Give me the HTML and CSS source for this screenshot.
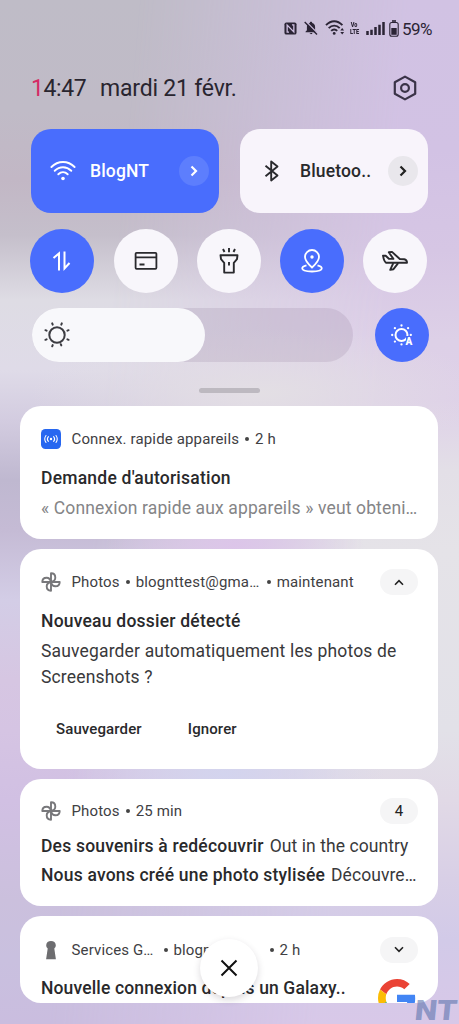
FILE: index.html
```html
<!DOCTYPE html>
<html lang="fr">
<head>
<meta charset="utf-8">
<title>Notifications</title>
<link rel="stylesheet" href="styles.css">
</head>
<body>
<svg class="defs" width="0" height="0">
  <symbol id="pinwheel" viewBox="0 0 20 20"><path d="M10 10V1.300c2.700 0 4.300 2 4.300 4.400 0 2-1.200 3.600-4.300 4.300zM10 10h8.700c0 2.700-2 4.300-4.400 4.300-2 0-3.600-1.200-4.300-4.300zM10 10v8.700c-2.700 0-4.300-2-4.300-4.400 0-2 1.200-3.600 4.300-4.300zM10 10H1.300c0-2.700 2-4.300 4.400-4.300 2 0 3.600 1.200 4.300 4.300z" fill="none" stroke="currentColor" stroke-width="1.900" stroke-linejoin="round"/></symbol>
</svg>
<main class="screen">
  <div class="status">
    <svg class="nfc" width="13" height="13" viewBox="0 0 14 14"><rect x=".5" y=".5" width="13" height="13" rx="2" fill="#2b2435"/><path d="M5.400 11H3.400V3.400l7.200 7.300V3H8.600" fill="none" stroke="#d0c0e2" stroke-width="1.400"/></svg>
    <svg class="bell" width="14" height="14" viewBox="0 0 14 14"><path d="M7 .7c.8 0 1.200.5 1.200 1.200 1.900.6 2.900 2 2.900 4v3.300l1.400 1.500v.6H1.500v-.6l1.400-1.500V5.900c0-2 1-3.400 2.900-4C5.800 1.200 6.200.7 7 .7zM5.700 12.100h2.700c-.2 1.600-2.500 1.600-2.700 0z" fill="#2b2435"/><path d="M1.800.3l12.400 12.600" stroke="#d0c0e2" stroke-width="1.300"/><path d="M.7.9L13 13.500" stroke="#2b2435" stroke-width="1.400"/></svg>
    <svg class="swifi" width="20" height="16" viewBox="0 0 20 16"><g fill="none" stroke="#2b2435" stroke-width="1.900"><path d="M1 5.200C6-.1 12.400-.1 17.400 5.200M3.700 8.200c3.200-3.500 7.800-3.500 11 0M6.200 10.900c1.800-1.900 4.200-1.900 6 0"/></g><circle cx="9.200" cy="13.400" r="1.400" fill="#2b2435"/><path d="M15.300 10.500l1.900-2.400 1.900 2.400zM15.300 12l1.900 2.400 1.900-2.400z" fill="#2b2435"/></svg>
    <span class="volte"><span>Vo</span><span>LTE</span></span>
    <svg class="signal" width="19" height="13" viewBox="0 0 19 13"><path d="M1.500 13V9M5.500 13V7.800M9.500 13V5M13.500 13V2.700M17.500 13V0" stroke="#2b2435" stroke-width="2.500"/></svg>
    <svg class="batt" width="10" height="17" viewBox="0 0 10 17"><path d="M3 1h4" stroke="#2b2435" stroke-width="1.600"/><rect x=".8" y="2.500" width="8.400" height="13.700" rx="2" fill="none" stroke="#2b2435" stroke-width="1.100"/><rect x="2.300" y="8" width="5.400" height="6.800" fill="#2b2435"/></svg>
    <span class="percent">59%</span>
  </div>
  <header class="head">
    <div class="clock"><span class="red">1</span>4:47</div>
    <div class="date">mardi 21 févr.</div>
    <svg class="gear" width="24" height="26" viewBox="0 0 24 26"><path d="M12 1.600l10.200 5.700v11.400L12 24.400 1.800 18.700V7.300z" fill="none" stroke="#3a3347" stroke-width="2.200" stroke-linejoin="round"/><circle cx="12" cy="13" r="3.900" fill="none" stroke="#3a3347" stroke-width="2.200"/></svg>
  </header>
  <section class="tiles">
    <div class="tile on">
      <svg width="26" height="20" viewBox="0 0 26 20"><g fill="none" stroke="#fff" stroke-width="1.900" stroke-linecap="round"><path d="M1.400 6C8-.6 18-.6 24.600 6M4.700 9.800c4.900-4.800 11.700-4.800 16.600 0M8.300 13.300c2.800-2.700 6.600-2.700 9.400 0"/></g><circle cx="13" cy="17.500" r="1.800" fill="#fff"/></svg>
      <span class="label">BlogNT</span>
      <span class="go"><svg width="8" height="12" viewBox="0 0 8 12"><path d="M1.500 1.500L6 6l-4.500 4.500" fill="none" stroke="#fff" stroke-width="2.200"/></svg></span>
    </div>
    <div class="tile off">
      <svg class="bt" width="16" height="22" viewBox="0 0 16 22"><path d="M1.500 5.700l12 9.800L7.200 20.500v-19l6.300 5-12 9.800" fill="none" stroke="#29292d" stroke-width="1.900" stroke-linejoin="round"/></svg>
      <span class="label">Bluetoo..</span>
      <span class="go"><svg width="8" height="12" viewBox="0 0 8 12"><path d="M1.500 1.500L6 6l-4.500 4.500" fill="none" stroke="#222" stroke-width="2.200"/></svg></span>
    </div>
  </section>
  <section class="toggles">
    <div class="round on"><svg width="20" height="22" viewBox="0 0 20 22"><path d="M1.500 8l5.500-4.600V20.500M12.500 1.500v17l5-5.500" fill="none" stroke="#fff" stroke-width="2"/></svg></div>
    <div class="round"><svg width="24" height="20" viewBox="0 0 24 20"><rect x="1.600" y="1.800" width="20.800" height="16" rx="1" fill="none" stroke="#29292d" stroke-width="1.800"/><path d="M2 6.300h20M5.500 13.500h5" fill="none" stroke="#29292d" stroke-width="1.800"/></svg></div>
    <div class="round"><svg width="20" height="28" viewBox="0 0 20 28"><path d="M1.500 8.200h17l-.5 4-3.200 3.600v9.800H5.200v-9.800L2 12.200zM10 15v3.400M10 1v4.300M4 2l1.500 3M16 2l-1.500 3" fill="none" stroke="#29292d" stroke-width="1.900" stroke-linejoin="round"/></svg></div>
    <div class="round on"><svg width="22" height="24" viewBox="0 0 22 24"><g fill="none" stroke="#fff" stroke-width="1.800"><path d="M11 18.500C6.300 14.200 4 11.300 4 8a7 7 0 0 1 14 0c0 3.300-2.300 6.200-7 10.500z"/><path d="M5.500 16.300c-2.300.6-4.300 1.500-4.300 3 0 4.300 19.600 4.300 19.600 0 0-1.500-2-2.400-4.300-3"/></g><circle cx="11" cy="8" r="1.700" fill="#fff"/></svg></div>
    <div class="round"><svg width="26" height="22" viewBox="0 0 26 22"><g fill="none" stroke="#29292d" stroke-width="1.900" stroke-linejoin="round"><path d="M1 5.700h2.700l3.200 3.100 4.500.1-4.600-6.600 3.200-.4 7.800 7.100 4.400.2c1.900.3 2.800 1.500 2.800 3.600H4.200C2.600 12 1.800 10.300 1 5.700z"/><path d="M11.300 13.200l-3.100 6.600 3.300-.6 4.700-6"/></g></svg></div>
  </section>
  <section class="brightness">
    <div class="slider"><div class="fill"><svg width="26" height="26" viewBox="0 0 26 26"><circle cx="13" cy="13" r="7.700" fill="none" stroke="#3c3c42" stroke-width="2"/><g stroke="#3c3c42" stroke-width="2" stroke-linecap="round"><path d="M17.300 2.600l.5-1.200M8.700 2.600l-.5-1.200M17.300 23.400l-.5-1.200M8.200 24.300l.5-1.200M23.400 8.700l1.200-.5M2.600 8.700l-1.200-.5M23.400 17.300l1.200.5M2.600 17.300l-1.200.5"/></g></svg></div></div>
    <div class="auto"><svg width="24" height="24" viewBox="0 0 24 24"><circle cx="11.500" cy="12" r="6" fill="none" stroke="#fff" stroke-width="2"/><g fill="#fff"><circle cx="11.500" cy="2.500" r="1.150"/><circle cx="18.100" cy="5.200" r="1.150"/><circle cx="4.900" cy="5.200" r="1.150"/><circle cx="2.200" cy="12" r="1.150"/><circle cx="20.800" cy="12" r="1.150"/><circle cx="4.900" cy="18.600" r="1.150"/><circle cx="11.500" cy="21.400" r="1.150"/></g></svg><span class="a">A</span></div>
  </section>
  <div class="handle"></div>
  <section class="cards">
    <article class="card c1">
      <div class="meta"><svg width="20" height="20" viewBox="0 0 20 20"><rect width="20" height="20" rx="4.500" fill="#2767f0"/><g fill="none" stroke="#fff" stroke-width="1.050" stroke-linecap="round"><path d="M7.400 7.600a3.600 3.600 0 0 0 0 4.800M12.600 7.600a3.600 3.600 0 0 1 0 4.800M5 6.500a6 6 0 0 0 0 7M15 6.500a6 6 0 0 1 0 7"/></g><circle cx="10" cy="10" r="1.200" fill="#fff"/></svg><span>Connex. rapide appareils</span><i></i><span>2 h</span></div>
      <h2>Demande d'autorisation</h2>
      <p class="gray">« Connexion rapide aux appareils » veut obteni…</p>
    </article>
    <article class="card c2">
      <div class="meta"><svg class="pin" width="20" height="20"><use href="#pinwheel"/></svg><span>Photos</span><i></i><span class="cut">blognttest@gma…</span><i></i><span>maintenant</span><b class="pill"><svg width="10" height="7" viewBox="0 0 10 7"><path d="M1 5.700L5 1.700l4 4" fill="none" stroke="#222" stroke-width="1.600"/></svg></b></div>
      <h2>Nouveau dossier détecté</h2>
      <p class="body">Sauvegarder automatiquement les photos de<br>Screenshots ?</p>
      <div class="actions"><span>Sauvegarder</span><span>Ignorer</span></div>
    </article>
    <article class="card c3">
      <div class="meta"><svg class="pin" width="20" height="20"><use href="#pinwheel"/></svg><span>Photos</span><i></i><span>25 min</span><b class="pill">4</b></div>
      <p class="line"><strong>Des souvenirs à redécouvrir</strong><span>Out in the country</span></p>
      <p class="line"><strong>Nous avons créé une photo stylisée</strong><span>Découvre…</span></p>
    </article>
    <article class="card c4">
      <div class="meta"><svg width="20" height="20" viewBox="0 0 20 20"><path d="M5.200 5.300C5.200 2.500 7.300 1 10 1s4.800 1.500 4.800 4.300c0 1.500-.7 2.500-1.500 3.200L14.900 19.200H5.100L6.700 8.500c-.8-.7-1.500-1.700-1.500-3.200z" fill="#6d6d70"/></svg><span class="service">Services G…</span><i></i><span class="account">blogntte…</span><i></i><span>2 h</span><b class="pill"><svg width="10" height="7" viewBox="0 0 10 7"><path d="M1 1.300l4 4 4-4" fill="none" stroke="#222" stroke-width="1.600"/></svg></b></div>
      <h2>Nouvelle connexion depuis un Galaxy..</h2>
      <svg class="google" width="38" height="38" viewBox="0 0 48 48"><path fill="#ea4335" d="M24 9.500c3.540 0 6.710 1.220 9.210 3.600l6.850-6.850C35.900 2.380 30.470 0 24 0 14.620 0 6.510 5.380 2.560 13.220l7.980 6.190C12.430 13.720 17.740 9.500 24 9.500z"/><path fill="#4285f4" d="M46.980 24.550c0-1.570-.15-3.090-.38-4.550H24v9.020h12.940c-.58 2.960-2.260 5.480-4.780 7.180l7.730 6c4.510-4.180 7.090-10.360 7.090-17.650z"/><path fill="#fbbc05" d="M10.530 28.590A14.500 14.500 0 0 1 9.770 24c0-1.600.27-3.140.76-4.590l-7.980-6.190A24 24 0 0 0 0 24c0 3.880.92 7.540 2.560 10.780z"/><path fill="#34a853" d="M24 48c6.480 0 11.930-2.130 15.890-5.810l-7.730-6C30.010 37.640 27.240 38.490 24 38.490c-6.260 0-11.570-4.220-13.470-9.910l-7.980 6.190C6.510 42.620 14.620 48 24 48z"/></svg>
    </article>
  </section>
  <div class="close"><svg width="18" height="18" viewBox="0 0 18 18"><path d="M1.500 1.500l15 15m0-15l-15 15" stroke="#111" stroke-width="2"/></svg></div>
  <div class="mark">NT</div>
</main>
</body>
</html>
```
FILE: styles.css
```css
* { box-sizing: border-box; }
body { margin: 0; font-family: Roboto, "Liberation Sans", sans-serif; color: #29292b; }
.defs { position: absolute; }
svg { display: block; flex: none; }
h2, p { margin: 0; white-space: nowrap; }

.screen {
  position: relative; width: 459px; height: 1024px; overflow: hidden; isolation: isolate;
  background: linear-gradient(180deg, #bfbcc7 0, #c0bbc7 110px, #c2b7c5 180px, #c5bfcb 235px, #dedce4 300px, #dfdbe8 370px, #d3cce0 420px, #bfb8d0 480px, #c5bbd5 530px, #d3cde6 600px, #d6c6e2 680px, #d5c4e3 730px, #d1c0e3 800px, #cbc0dd 900px, #c9c0df 960px, #cabddf 1024px);
}
.screen::before {
  content: ""; position: absolute; z-index: -1; inset: 0;
  background: linear-gradient(180deg, #d1c2e3 0, #d2c2e4 150px, #d6c6e4 250px, #ddd0e7 340px, #ded0e8 400px, #e3dfe7 470px, #e5e3e8 550px, #e2e1e8 730px, #e1d9e6 800px, #d8cfe6 880px, #d2cae8 940px, #d8c8e8 1024px);
  mask-image: linear-gradient(95deg, transparent 25%, #000 75%);
}
.screen::after {
  content: ""; position: absolute; z-index: -1; inset: 0;
  background:
    radial-gradient(ellipse 130px 60px at 235px 545px, #dcc5e9, transparent),
    radial-gradient(ellipse 160px 70px at 225px 774px, #d3d4ee, transparent),
    radial-gradient(ellipse 230px 65px at 260px 393px, #e3dfe4, transparent);
}

.status { display: flex; align-items: center; height: 57px; padding-left: 284px; }
.nfc, .bell, .swifi { margin-top: -1px; }
.bell { margin-left: 7px; }
.swifi { margin-left: 7px; }
.volte { display: flex; flex-direction: column; width: 11px; margin: -2px 0 0 5px; font-size: 7.500px; line-height: 7px; font-weight: 900; transform: scaleX(.74); transform-origin: left; color: #2b2435; }
.volte span:first-child { padding-left: 1px; }
.signal { margin-left: 5px; }
.batt { margin-left: 4px; }
.percent { margin-left: 3px; font-size: 17px; letter-spacing: -.5px; color: #2b2435; }

.head { display: flex; align-items: center; height: 62px; padding: 0 42px 0 31px; font-size: 23px; line-height: 27px; color: #29252f; white-space: nowrap; }
.clock { width: 69px; letter-spacing: -.4px; }
.red { color: #d52a64; }
.date { letter-spacing: -.2px; }
.gear { margin-left: auto; }

.tiles { display: flex; gap: 21px; padding: 10px 31px 0; }
.tile { display: flex; align-items: center; width: 188px; height: 84px; border-radius: 20px; font-size: 17.500px; font-weight: 500; letter-spacing: .15px; }
.tile.on { padding: 0 10px 0 19px; color: #fff; }
.on, .auto { background: #496dfd; }
.tile.on .label { margin-left: 14px; }
.tile.off { padding: 0 10px 0 24px; background: #f8f4fb; }
.tile.off .label { margin-left: 20px; }
.go { display: grid; place-items: center; width: 30px; height: 30px; margin-left: auto; border-radius: 50%; background: #e9e7ec; }
.on .go { background: #5d7efd; }

.toggles { display: flex; justify-content: space-between; padding: 16px 31.500px 0 30.400px; }
.round { display: grid; place-items: center; width: 64px; height: 64px; border-radius: 50%; background: #f8f6fb; }
.round.on { background: #496dfd; }
.brightness { display: flex; justify-content: space-between; padding: 15px 30.500px 0 32px; }
.slider { width: 321px; height: 54px; border-radius: 27px; background: rgba(143, 123, 153, .2); }
.fill { display: flex; align-items: center; width: 173px; height: 54px; padding-left: 12px; border-radius: 27px; background: #f8f8fb; }
.auto { position: relative; display: grid; place-items: center; width: 54px; height: 54px; border-radius: 50%; }
.auto .a { position: absolute; left: 31px; top: 28px; font-size: 10px; line-height: 12px; font-weight: 900; color: #fff; background: #496dfd; }
.handle { width: 61px; height: 5px; margin: 26px auto 0 199px; border-radius: 3px; background: #bdb9c0; }

.cards { display: flex; flex-direction: column; gap: 10px; padding: 13px 20px 0; }
.card { position: relative; width: 418px; padding: 0 20px 0 21px; border-radius: 21px; background: #fff; overflow: hidden; }
.c1 { height: 133px; }
.c2 { height: 220px; }
.c3 { height: 127px; margin-top: -.5px; }
.c4 { height: 87px; }
.meta { display: flex; align-items: center; height: 26px; margin-top: 20px; font-size: 15px; letter-spacing: .14px; color: #404043; white-space: nowrap; }
.meta > svg { margin-right: 10.500px; }
.meta i { flex: none; width: 4px; height: 4px; margin: 0 6px; border-radius: 50%; background: #444; }
.cut { width: 125px; letter-spacing: .18px; }
.service { width: 86px; }
.account { width: 90px; }
.pin { color: #78787b; }
.pill { display: grid; place-items: center; width: 38px; height: 26px; margin-left: auto; border-radius: 13px; background: #f5f5f6; font-weight: 400; color: #222; }
h2 { font-size: 17.500px; line-height: 26px; font-weight: 500; letter-spacing: .22px; }
p { font-size: 17.500px; line-height: 26px; letter-spacing: .16px; }
.c1 h2 { margin-top: 13px; }
.gray { margin-top: 4px; color: #858587; letter-spacing: .13px; }
.c2 h2 { margin-top: 13px; }
.body { margin-top: 4px; color: #39393b; }
.actions { display: flex; gap: 46px; padding: 28px 15px 0; font-size: 15px; line-height: 22px; font-weight: 500; letter-spacing: .12px; }
.c3 .meta { margin-top: 19px; }
.line { display: flex; gap: 6px; line-height: 29px; }
.line span { color: #39393b; letter-spacing: .07px; }
.c3 .meta + .line { margin-top: 8px; }
.line strong { font-weight: 500; letter-spacing: .2px; }
.c4 .meta { margin-top: 21px; }
.c4 h2 { margin-top: 12px; letter-spacing: .14px; }
.google { position: absolute; left: 358px; top: 63px; }

.close { position: absolute; left: 200px; top: 939px; display: grid; place-items: center; width: 58px; height: 58px; border-radius: 50%; background: #fff; box-shadow: 0 3px 7px rgba(40, 30, 50, .17); }
.mark { position: absolute; left: 415px; top: 999px; font: 900 28px/24px Roboto, sans-serif; color: rgba(94, 117, 174, .62); transform: scaleX(1.14) skewX(-5deg); transform-origin: left; }
```
